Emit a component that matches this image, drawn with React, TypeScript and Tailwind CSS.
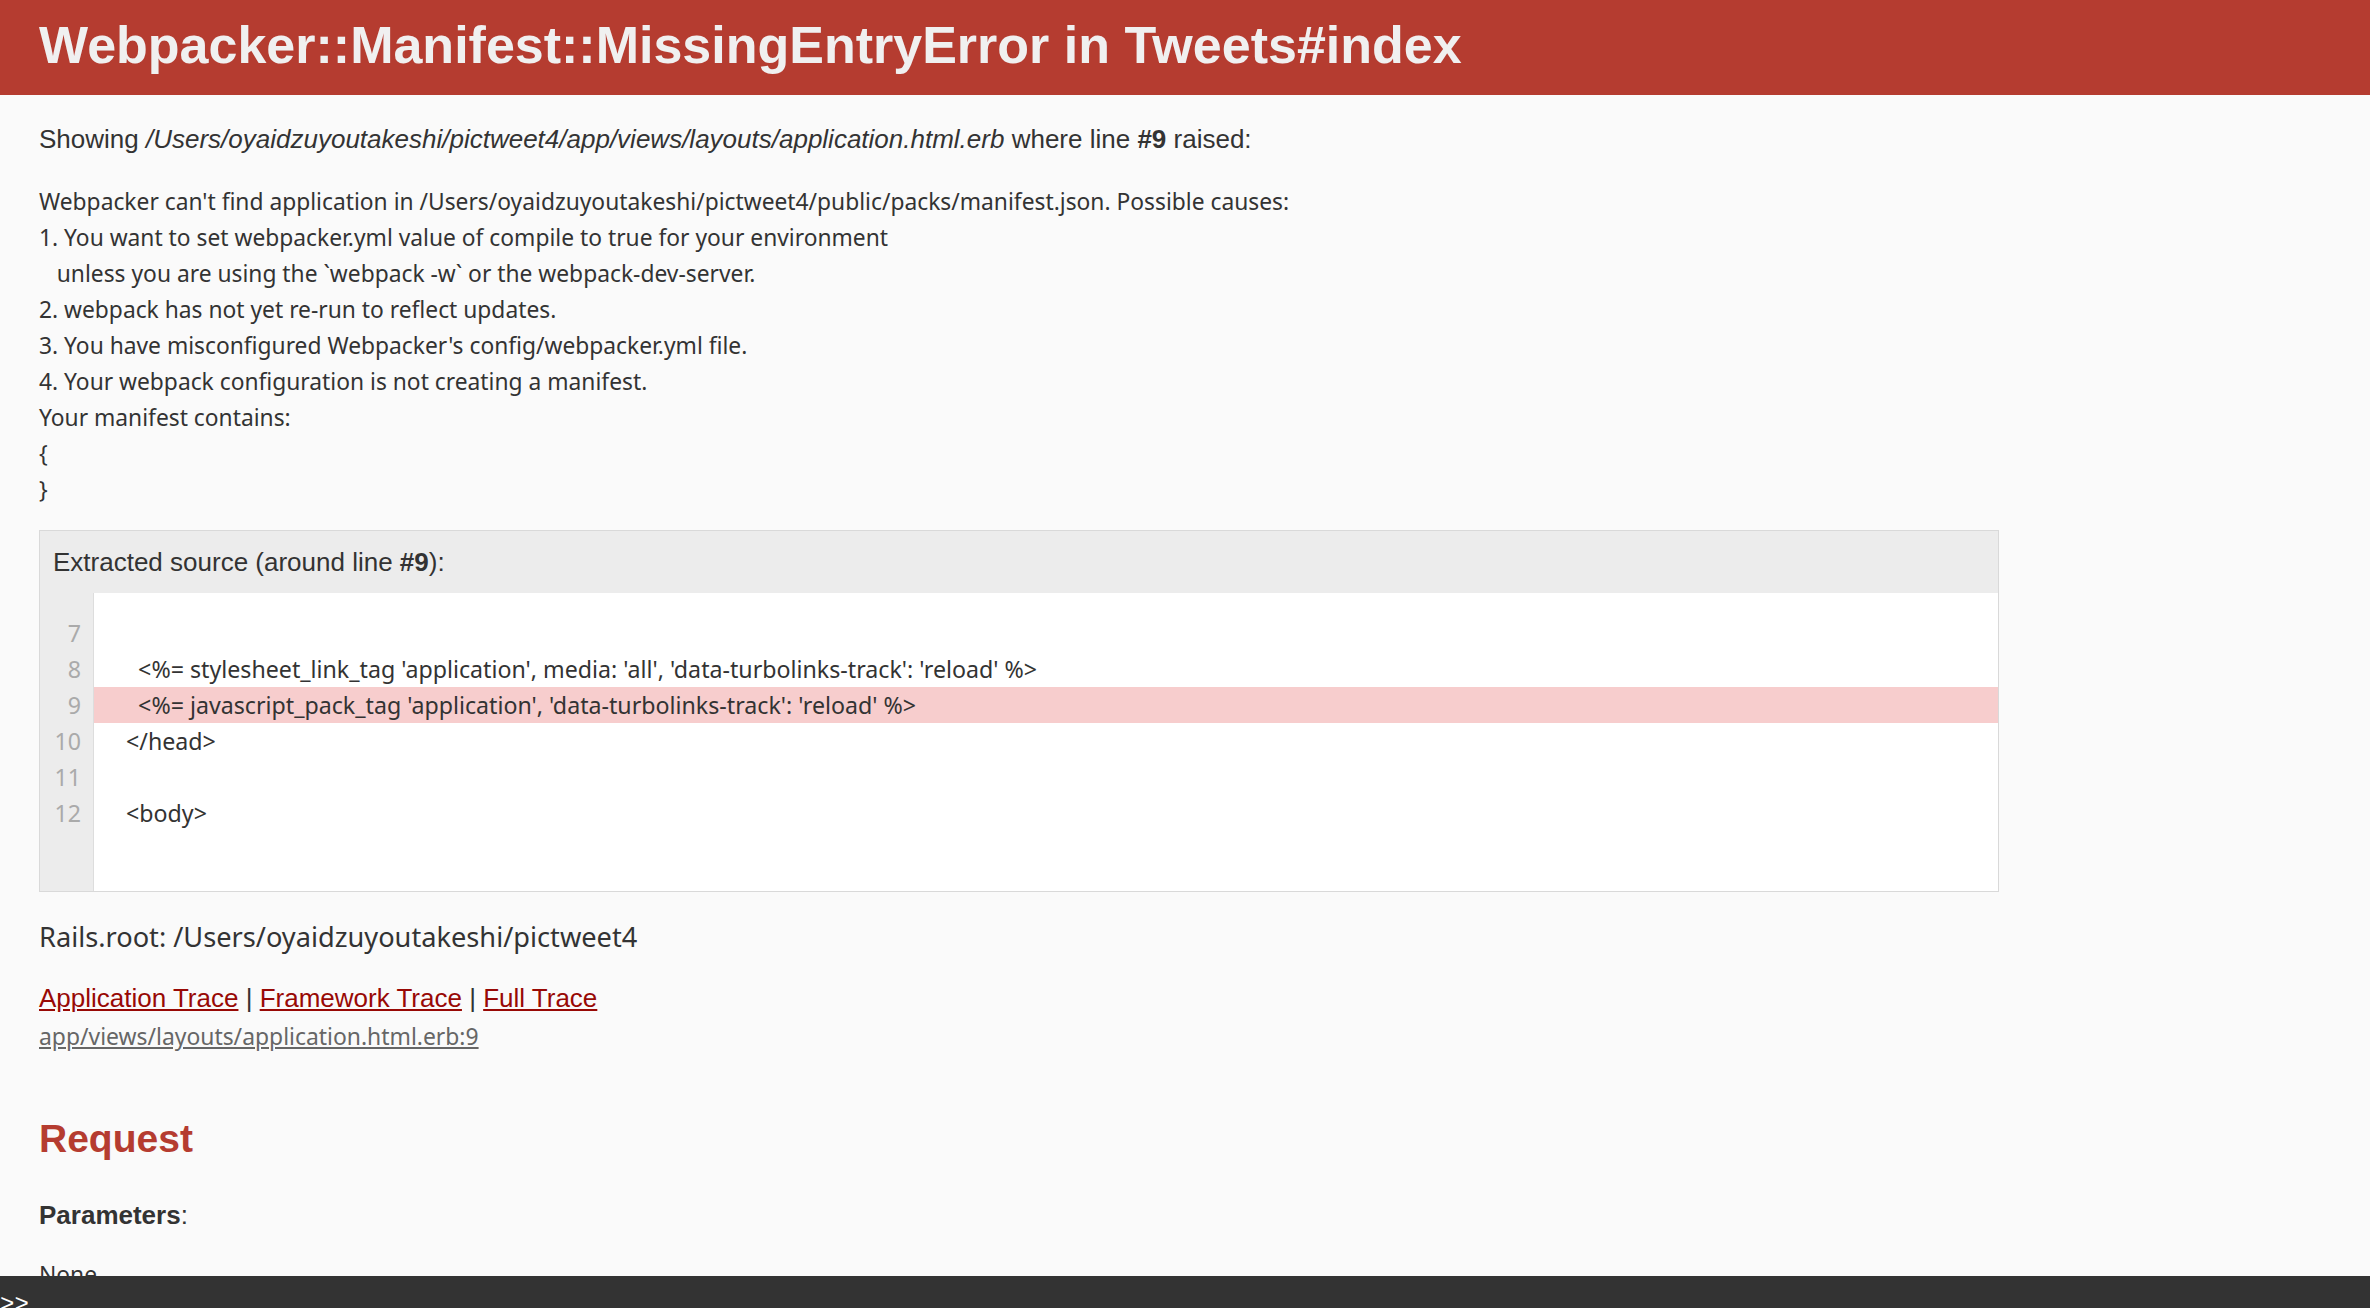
const helv = "font-['Liberation_Sans',Arial,sans-serif]";
const jp = "font-['Noto_Sans','Noto_Sans_CJK_JP',sans-serif]";

const message = `Webpacker can't find application in /Users/oyaidzuyoutakeshi/pictweet4/public/packs/manifest.json. Possible causes:
1. You want to set webpacker.yml value of compile to true for your environment
   unless you are using the \`webpack -w\` or the webpack-dev-server.
2. webpack has not yet re-run to reflect updates.
3. You have misconfigured Webpacker's config/webpacker.yml file.
4. Your webpack configuration is not creating a manifest.
Your manifest contains:
{
}`;

const source = [
  { n: 7, code: "" },
  { n: 8, code: "    <%= stylesheet_link_tag 'application', media: 'all', 'data-turbolinks-track': 'reload' %>" },
  { n: 9, code: "    <%= javascript_pack_tag 'application', 'data-turbolinks-track': 'reload' %>", active: true },
  { n: 10, code: "  </head>" },
  { n: 11, code: "" },
  { n: 12, code: "  <body>" },
];

export default function App() {
  return (
    <div className="min-h-screen bg-[#fafafa] text-[#333]">
      <header className="h-[95px] bg-[#b53c30] px-[39px] pt-[17px]">
        <h1 className={`${helv} whitespace-nowrap text-[52px] leading-[57px] font-bold text-[#f0f0f0]`}>
          Webpacker::Manifest::MissingEntryError in Tweets#index
        </h1>
      </header>

      <div className="px-[39px] pb-[80px]">
        <p className={`${helv} mt-[26px] text-[26px] leading-[36px]`}>
          Showing <i>/Users/oyaidzuyoutakeshi/pictweet4/app/views/layouts/application.html.erb</i> where line{" "}
          <b>#9</b> raised:
        </p>

        <pre className={`${jp} mt-[27px] whitespace-pre text-[22.8px] leading-[36px]`}>{message}</pre>

        <div className="mt-[22px] w-[1960px] border border-[#d9d9d9] bg-[#ececec]">
          <div className={`${helv} p-[13px] text-[26px] leading-[36px]`}>
            Extracted source (around line <b>#9</b>):
          </div>
          <div className={`${jp} flex bg-white text-[23.2px] leading-[36px]`}>
            <div className="w-[54px] shrink-0 border-r border-[#ddd] bg-[#ececec] pt-[22px] pb-[60px] pr-[12px] text-right text-[#aaa]">
              {source.map((l) => (
                <div key={l.n} className="h-[36px]">
                  {l.n}
                </div>
              ))}
            </div>
            <div className="flex-1 pt-[22px] pb-[60px]">
              {source.map((l) => (
                <div
                  key={l.n}
                  className={`h-[36px] whitespace-pre pl-[20px] ${l.active ? "bg-[#f7cdcd]" : ""}`}
                >
                  {l.code}
                </div>
              ))}
            </div>
          </div>
        </div>

        <p className={`${jp} mt-[27px] text-[27.2px] leading-[36px]`}>
          Rails.root: /Users/oyaidzuyoutakeshi/pictweet4
        </p>

        <p className={`${helv} mt-[25px] text-[26px] leading-[36px]`}>
          <a href="#" className="text-[#980905] underline">Application Trace</a> |{" "}
          <a href="#" className="text-[#980905] underline">Framework Trace</a> |{" "}
          <a href="#" className="text-[#980905] underline">Full Trace</a>
        </p>
        <pre className={`${jp} mt-[3px] text-[22.9px] leading-[36px]`}>
          <a href="#" className="text-[#666] underline">app/views/layouts/application.html.erb:9</a>
        </pre>

        <h2 className={`${helv} mt-[59px] text-[39px] leading-[50px] font-bold text-[#b53c30]`}>Request</h2>

        <p className={`${helv} mt-[33px] text-[26px] leading-[36px]`}>
          <b>Parameters</b>:
        </p>
        <pre className={`${jp} mt-[24px] text-[22.8px] leading-[36px]`}>None</pre>
      </div>

      <div className="fixed bottom-0 left-0 right-0 h-[32px] overflow-hidden bg-[#333]">
        <div className="pt-[17px] font-['Liberation_Mono',monospace] text-[24px] leading-[24px] text-white">
          &gt;&gt;
        </div>
      </div>
    </div>
  );
}
